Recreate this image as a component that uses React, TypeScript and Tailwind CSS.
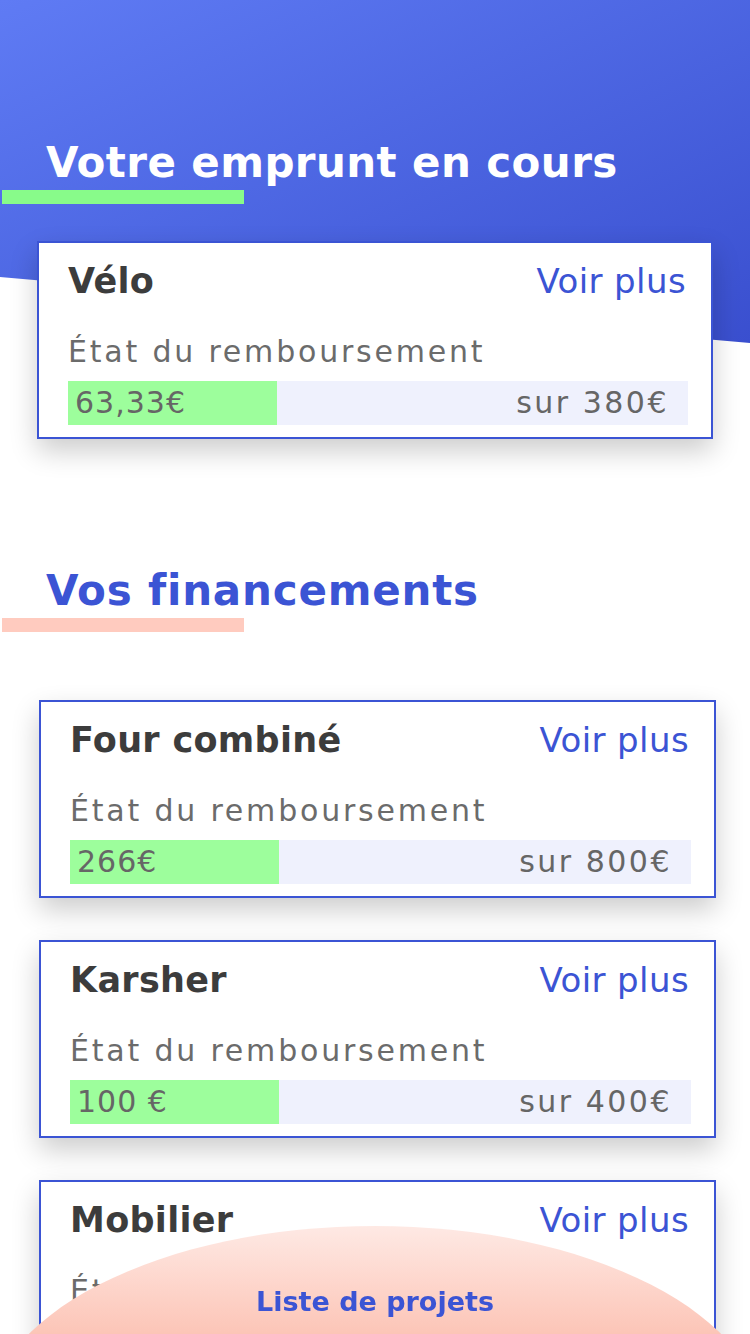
type Loan = {
  name: string;
  paid: string;
  total: string;
};

const current: Loan = { name: "Vélo", paid: "63,33€", total: "sur 380€" };

const fundings: Loan[] = [
  { name: "Four combiné", paid: "266€", total: "sur 800€" },
  { name: "Karsher", paid: "100 €", total: "sur 400€" },
  { name: "Mobilier", paid: "120€", total: "sur 600€" },
];

function LoanCard({ loan }: { loan: Loan }) {
  return (
    <div className="border-2 border-[#3b54d4] bg-white pt-[18px] pl-[29px] pr-[23px] pb-[12px] shadow-[0_12px_26px_rgba(0,0,0,0.2)]">
      <div className="flex items-baseline justify-between">
        <div className="text-[35px] leading-[40px] font-bold tracking-[0.3px] text-[#3c3c3c]">
          {loan.name}
        </div>
        <a href="#" className="text-[34px] leading-[40px] tracking-[0.4px] text-[#3b54d4] mr-[2px]">
          Voir plus
        </a>
      </div>
      <div className="mt-[33px] text-[30px] leading-[36px] tracking-[2.8px] text-[#6b6b6b]">
        État du remboursement
      </div>
      <div className="mt-[11px] flex h-[44px] bg-[#eff1fd] text-[30px] leading-[44px] text-[#666666]">
        <div className="w-[209px] bg-[#9dfe9c] pl-[7px] tracking-[1px]">
          {loan.paid}
        </div>
        <div className="ml-auto pr-[19px] tracking-[2.5px]">{loan.total}</div>
      </div>
    </div>
  );
}

function SectionTitle({ text, light, bar }: { text: string; light: boolean; bar: string }) {
  return (
    <div>
      <h2
        className={
          light
            ? "pl-[46px] text-[42px] leading-[50px] font-bold tracking-[0.4px] text-white"
            : "pl-[46px] text-[42px] leading-[50px] font-bold tracking-[0.8px] text-[#3b54d4]"
        }
      >
        {text}
      </h2>
      <div className={"mt-[2px] ml-[2px] h-[14px] w-[242px] " + bar} />
    </div>
  );
}

export default function App() {
  return (
    <div className="relative min-h-screen overflow-x-hidden bg-white pb-[220px] font-['DejaVu_Sans',sans-serif]">
      <section className="relative pt-[138px]">
        <div className="absolute inset-x-0 top-0 h-[343px] bg-linear-to-br from-[#5f7bf4] to-[#3a4fcf] [clip-path:polygon(0_0,100%_0,100%_343px,0_277px)]" />
        <div className="relative">
          <SectionTitle text="Votre emprunt en cours" light={true} bar="bg-[#88fb8a]" />
          <div className="mt-[37px] ml-[37px] w-[676px]">
            <LoanCard loan={current} />
          </div>
        </div>
      </section>

      <section className="mt-[127px]">
        <SectionTitle text="Vos financements" light={false} bar="bg-[#ffcbbf]" />
        <div className="mt-[68px] ml-[39px] flex w-[677px] flex-col gap-[42px]">
          {fundings.map((f) => (
            <LoanCard key={f.name} loan={f} />
          ))}
        </div>
      </section>

      <div className="fixed left-[-15px] bottom-[-292px] h-[400px] w-[780px] rounded-[50%] bg-linear-to-b from-[#fee9e4] from-0% to-[#fcc5b7] to-27% pt-[60px] text-center">
        <span className="text-[27px] leading-[32px] font-bold text-[#3b54d4]">
          Liste de projets
        </span>
      </div>
    </div>
  );
}
